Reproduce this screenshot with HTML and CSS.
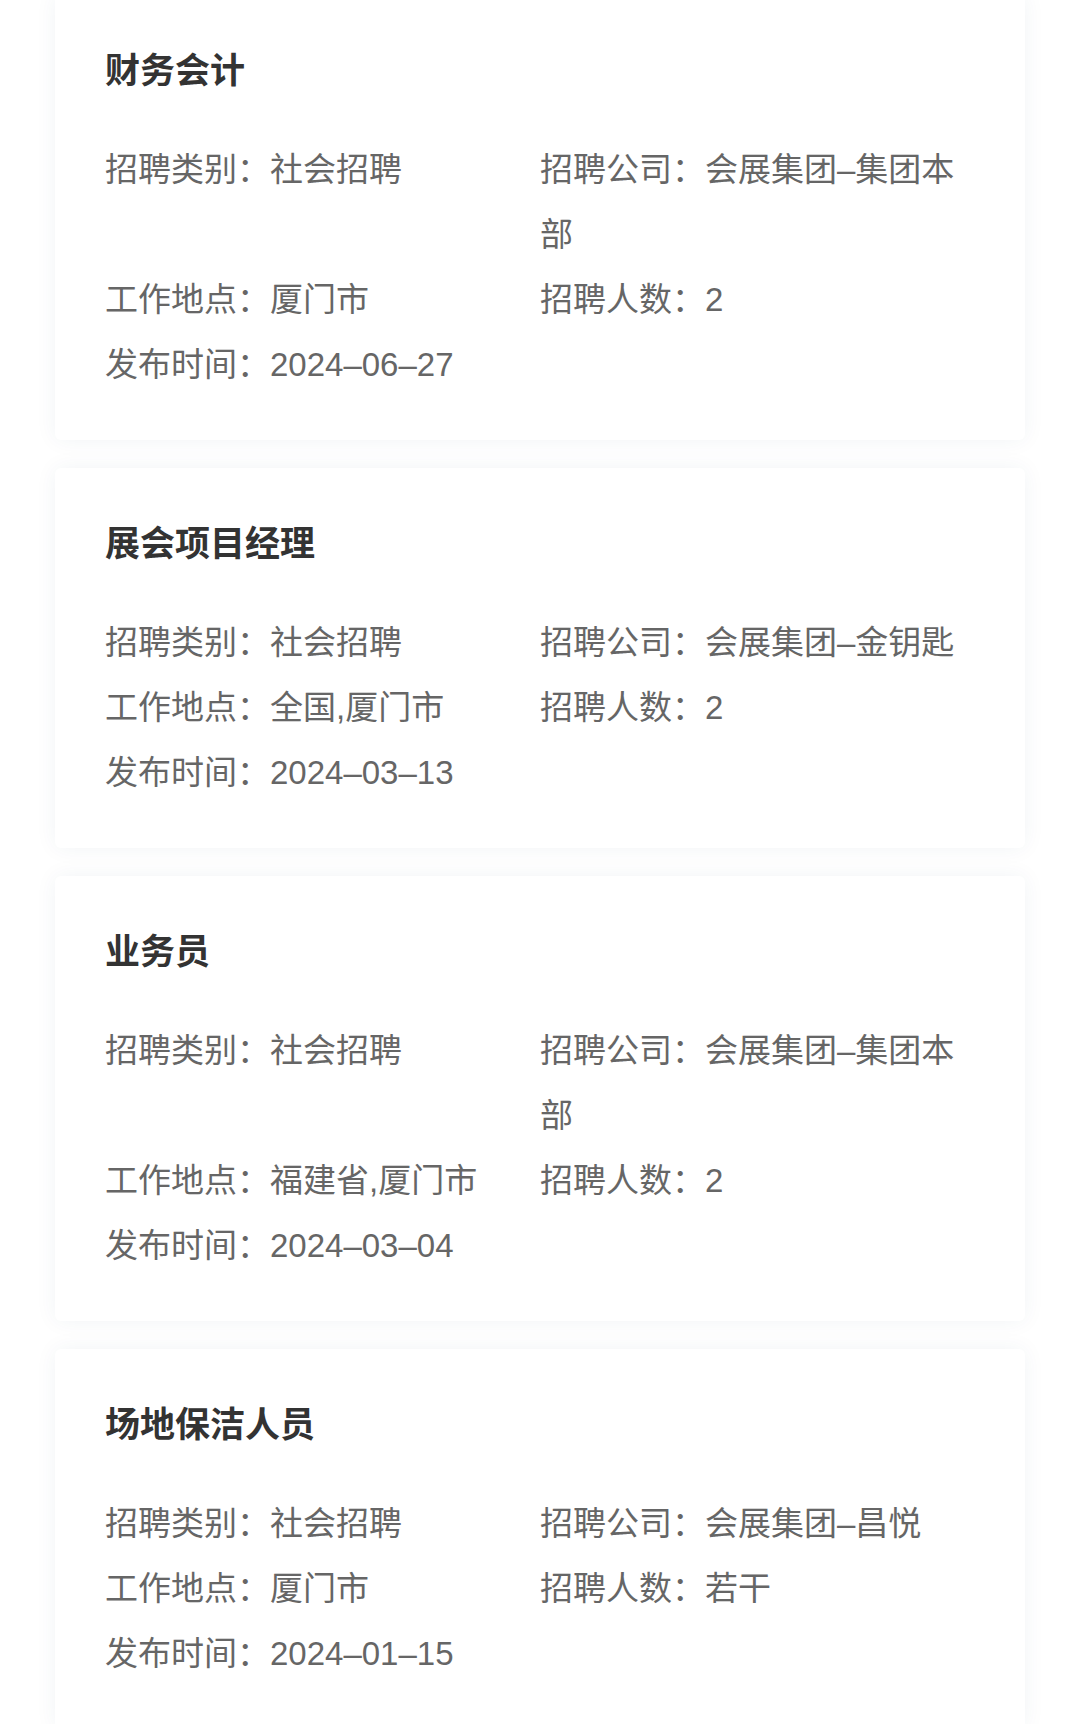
FILE: index.html
```html
<!DOCTYPE html>
<html lang="zh-CN">
<head>
  <meta charset="UTF-8" />
  <meta name="viewport" content="width=device-width, initial-scale=1.0"/>
  <title>招聘信息</title>
  <link rel="stylesheet" href="styles.css">
</head>
<body>
  <div class="job-list">

    <div class="job-card">
      <h2 class="job-title">财务会计</h2>
      <div class="job-info">
        <div class="info-item">招聘类别：社会招聘</div>
        <div class="info-item">招聘公司：会展集团–集团本部</div>
        <div class="info-item">工作地点：厦门市</div>
        <div class="info-item">招聘人数：2</div>
        <div class="info-item">发布时间：2024–06–27</div>
      </div>
    </div>

    <div class="job-card">
      <h2 class="job-title">展会项目经理</h2>
      <div class="job-info">
        <div class="info-item">招聘类别：社会招聘</div>
        <div class="info-item">招聘公司：会展集团–金钥匙</div>
        <div class="info-item">工作地点：全国,厦门市</div>
        <div class="info-item">招聘人数：2</div>
        <div class="info-item">发布时间：2024–03–13</div>
      </div>
    </div>

    <div class="job-card">
      <h2 class="job-title">业务员</h2>
      <div class="job-info">
        <div class="info-item">招聘类别：社会招聘</div>
        <div class="info-item">招聘公司：会展集团–集团本部</div>
        <div class="info-item">工作地点：福建省,厦门市</div>
        <div class="info-item">招聘人数：2</div>
        <div class="info-item">发布时间：2024–03–04</div>
      </div>
    </div>

    <div class="job-card">
      <h2 class="job-title">场地保洁人员</h2>
      <div class="job-info">
        <div class="info-item">招聘类别：社会招聘</div>
        <div class="info-item">招聘公司：会展集团–昌悦</div>
        <div class="info-item">工作地点：厦门市</div>
        <div class="info-item">招聘人数：若干</div>
        <div class="info-item">发布时间：2024–01–15</div>
      </div>
    </div>

  </div>
</body>
</html>
```

FILE: styles.css
```css
body {
  font-family: "Liberation Sans", "Noto Sans CJK SC", sans-serif;
  background-color: #fff;
  margin: 0;
  padding: 0;
  color: #666;
  overflow: hidden;
}

/* list is scrolled a few px, first card starts above the fold */
.job-list {
  display: flex;
  flex-direction: column;
  gap: 28px;
  margin: -5px 55px 0;
}

.job-card {
  background: #fff;
  border-radius: 6px;
  padding: 50px 50px 43px;
  box-shadow: 0 0 22px rgba(40, 60, 110, 0.06);
}

.job-title {
  margin: 0 0 40px;
  font-size: 35px;
  line-height: 52px;
  font-weight: 600;
  color: #333;
}

.job-info {
  display: grid;
  grid-template-columns: 1fr 1fr;
}

.info-item {
  font-size: 33px;
  line-height: 65px;
  color: #666;
}
```
